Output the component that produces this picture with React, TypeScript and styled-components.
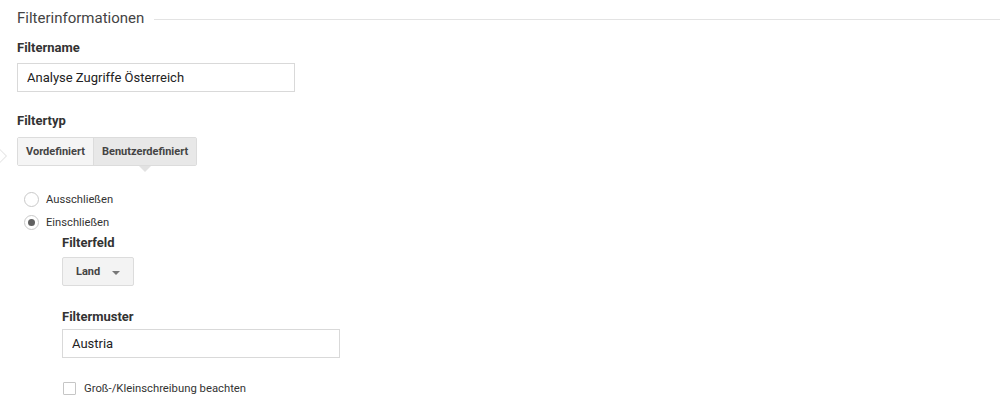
import React, { useState } from 'react';
import styled, { createGlobalStyle } from 'styled-components';

const GlobalStyle = createGlobalStyle`
  html, body {
    margin: 0;
    padding: 0;
    background: #fff;
  }
  body {
    font-family: Roboto, "Liberation Sans", Arial, sans-serif;
    color: #333;
  }
`;

const Page = styled.div`
  position: relative;
  width: 1000px;
  height: 410px;
  overflow: hidden;
  padding-left: 17px;
  box-sizing: border-box;
`;

const StepMarker = styled.div`
  position: absolute;
  left: -5px;
  top: 151px;
  width: 8px;
  height: 8px;
  border: 1px solid #e6e6e6;
  transform: rotate(45deg);
  background: #fff;
`;

const Legend = styled.div`
  display: flex;
  align-items: center;
  height: 20px;
  padding-top: 8px;
`;

const LegendTitle = styled.span`
  font-size: 15px;
  color: #444;
  white-space: nowrap;
`;

const LegendLine = styled.div`
  flex: 1;
  margin-left: 10px;
  margin-top: 3px;
  border-top: 1px solid #e3e3e3;
`;

const FieldLabel = styled.div<{ $top: number }>`
  margin-top: ${(p) => p.$top}px;
  font-size: 13px;
  font-weight: 700;
  color: #333;
  line-height: 16px;
`;

const TextInput = styled.input<{ $width: number; $top: number }>`
  display: block;
  box-sizing: border-box;
  width: ${(p) => p.$width}px;
  height: 29px;
  margin-top: ${(p) => p.$top}px;
  padding: 0 9px;
  border: 1px solid #d9d9d9;
  border-radius: 0;
  font-family: Roboto, "Liberation Sans", Arial, sans-serif;
  font-size: 13px;
  color: #222;
  outline: none;
`;

const ButtonGroup = styled.div`
  display: inline-flex;
  margin-top: 8px;
  border: 1px solid #dcdcdc;
  border-radius: 2px;
`;

const ToggleButton = styled.button<{ $active?: boolean }>`
  position: relative;
  height: 27px;
  padding: 0 8px;
  border: none;
  border-left: ${(p) => (p.$active ? '1px solid #dcdcdc' : 'none')};
  background: ${(p) => (p.$active ? '#e8e8e8' : '#f5f5f5')};
  font-family: Roboto, "Liberation Sans", Arial, sans-serif;
  font-size: 11px;
  font-weight: 700;
  color: #444;
  cursor: pointer;

  &::after {
    content: '';
    display: ${(p) => (p.$active ? 'block' : 'none')};
    position: absolute;
    left: 50%;
    bottom: -7px;
    margin-left: -6px;
    border-left: 6px solid transparent;
    border-right: 6px solid transparent;
    border-top: 6px solid #e2e2e2;
  }
`;

const RadioList = styled.div`
  margin-top: 26px;
  padding-left: 7px;
  display: flex;
  flex-direction: column;
  gap: 8px;
`;

const RadioRow = styled.label`
  display: flex;
  align-items: center;
  gap: 7px;
  font-size: 11.2px;
  color: #333;
  height: 15px;
  cursor: pointer;
`;

const RadioCircle = styled.span<{ $checked?: boolean }>`
  box-sizing: border-box;
  width: 15px;
  height: 15px;
  border-radius: 50%;
  border: 1px solid #c9c9c9;
  background: #fff;
  display: flex;
  align-items: center;
  justify-content: center;

  &::after {
    content: '';
    display: ${(p) => (p.$checked ? 'block' : 'none')};
    width: 7px;
    height: 7px;
    border-radius: 50%;
    background: #616161;
  }
`;

const Nested = styled.div`
  padding-left: 45px;
`;

const Dropdown = styled.button`
  display: flex;
  align-items: center;
  gap: 12px;
  box-sizing: border-box;
  height: 29px;
  width: 72px;
  margin-top: 6px;
  padding: 0 0 0 13px;
  border: 1px solid #dcdcdc;
  border-radius: 2px;
  background: #f3f3f3;
  font-family: Roboto, "Liberation Sans", Arial, sans-serif;
  font-size: 11px;
  font-weight: 700;
  color: #444;
`;

const Caret = styled.span`
  width: 0;
  height: 0;
  margin-top: 2px;
  border-left: 4px solid transparent;
  border-right: 4px solid transparent;
  border-top: 4px solid #777;
`;

const CheckRow = styled.label`
  display: flex;
  align-items: center;
  gap: 8px;
  margin-top: 24px;
  padding-left: 1px;
  font-size: 11.3px;
  color: #333;
`;

const CheckBox = styled.span`
  box-sizing: border-box;
  width: 13px;
  height: 13px;
  border: 1px solid #c6c6c6;
  border-radius: 1px;
  background: #fff;
`;

export default function App() {
  const [mode, setMode] = useState<'pre' | 'custom'>('custom');
  const [include, setInclude] = useState(true);
  const [name, setName] = useState('Analyse Zugriffe Österreich');
  const [pattern, setPattern] = useState('Austria');

  return (
    <>
      <GlobalStyle />
      <Page>
        <StepMarker />
        <Legend>
          <LegendTitle>Filterinformationen</LegendTitle>
          <LegendLine />
        </Legend>

        <FieldLabel $top={12}>Filtername</FieldLabel>
        <TextInput $width={278} $top={7} value={name} onChange={(e) => setName(e.target.value)} />

        <FieldLabel $top={21}>Filtertyp</FieldLabel>
        <ButtonGroup>
          <ToggleButton $active={mode === 'pre'} onClick={() => setMode('pre')}>
            Vordefiniert
          </ToggleButton>
          <ToggleButton $active={mode === 'custom'} onClick={() => setMode('custom')}>
            Benutzerdefiniert
          </ToggleButton>
        </ButtonGroup>

        <RadioList>
          <RadioRow onClick={() => setInclude(false)}>
            <RadioCircle $checked={!include} />
            Ausschließen
          </RadioRow>
          <RadioRow onClick={() => setInclude(true)}>
            <RadioCircle $checked={include} />
            Einschließen
          </RadioRow>
        </RadioList>

        <Nested>
          <FieldLabel $top={5}>Filterfeld</FieldLabel>
          <Dropdown>
            Land
            <Caret />
          </Dropdown>

          <FieldLabel $top={23}>Filtermuster</FieldLabel>
          <TextInput $width={278} $top={4} value={pattern} onChange={(e) => setPattern(e.target.value)} />

          <CheckRow>
            <CheckBox />
            Groß-/Kleinschreibung beachten
          </CheckRow>
        </Nested>
      </Page>
    </>
  );
}
